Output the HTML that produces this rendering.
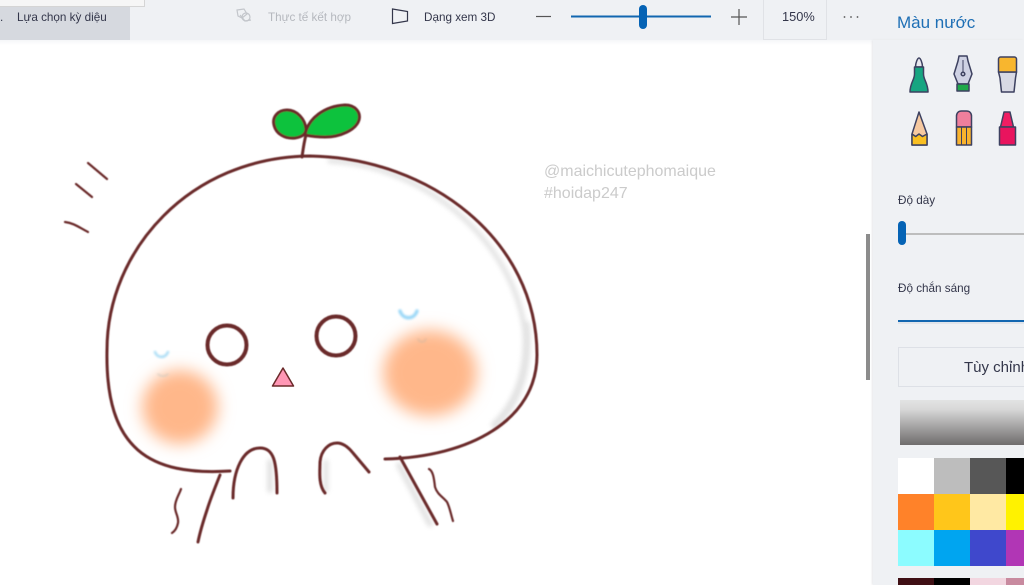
<!DOCTYPE html>
<html><head><meta charset="utf-8"><style>
html,body{margin:0;padding:0;width:1024px;height:585px;overflow:hidden;background:#fff;font-family:"Liberation Sans",sans-serif}
#r{position:absolute;left:0;top:0;width:1024px;height:585px;overflow:hidden}
.a{position:absolute}
.t{position:absolute;white-space:nowrap;line-height:1;color:#33364a;font-size:12px}
.s{position:absolute;width:36px;height:36px}
</style></head><body><div id="r">
<div class="a" style="left:0;top:0;width:1024px;height:40px;background:#eff1f4"></div>
<div class="a" style="left:0;top:40px;width:873px;height:5px;background:linear-gradient(#f5f6f8,#fff)"></div>
<div class="a" style="left:0;top:0;width:130px;height:40px;background:#d6d9df"></div>
<div class="a" style="left:0;top:0;width:144px;height:6px;background:#f6f6f6;border:1px solid #d5d5d5;border-top:0;border-left:0"></div>
<div class="t" style="left:17px;top:12px;font-size:11.7px">Lựa chọn kỳ diệu</div>
<div class="t" style="left:0;top:12px;font-size:11.7px">.</div>
<div class="t" style="left:268px;top:12px;font-size:11.7px;color:#b5b8be">Thực tế kết hợp</div>
<div class="t" style="left:424px;top:12px;font-size:11.7px">Dạng xem 3D</div>
<div class="a" style="left:763px;top:0;width:62px;height:39px;border:1px solid #e0e2e6;border-top:0"></div>
<div class="t" style="left:782px;top:11px;font-size:12.8px">150%</div>
<div class="t" style="left:897px;top:14px;font-size:17px;color:#1e6fb5">Màu nước</div>

<div class="a" style="left:873px;top:40px;width:151px;height:545px;background:#eff1f4;box-shadow:-1px 0 2px #e6e7ea"></div>
<div class="a" style="left:866px;top:234px;width:4px;height:146px;background:#8c8c8c"></div>

<div class="t" style="left:898px;top:195px;font-size:11.7px">Độ dày</div>
<div class="t" style="left:898px;top:283px;font-size:11.7px">Độ chắn sáng</div>
<div class="a" style="left:906px;top:233px;width:118px;height:2px;background:#bdbdbd"></div>
<div class="a" style="left:898px;top:221px;width:8px;height:24px;border-radius:4px;background:#0563b5"></div>
<div class="a" style="left:898px;top:320px;width:126px;height:2px;background:#1266b0"></div>
<div class="a" style="left:898px;top:322px;width:126px;height:2px;background:#e0e4ea"></div>

<div class="a" style="left:898px;top:347px;width:130px;height:38px;border:1px solid #dde0e6"></div>
<div class="t" style="left:964px;top:360px;font-size:15px">Tùy chỉnh</div>
<div class="a" style="left:900px;top:400px;width:124px;height:45px;background:linear-gradient(#e2e3e3,#d8d8d8 20%,#6f6c6c 100%)"></div>

<div class="s" style="left:898px;top:458px;background:#fff"></div>
<div class="s" style="left:934px;top:458px;background:#bdbdbd"></div>
<div class="s" style="left:970px;top:458px;background:#575757"></div>
<div class="s" style="left:1006px;top:458px;background:#000"></div>
<div class="s" style="left:898px;top:494px;background:#ff8229"></div>
<div class="s" style="left:934px;top:494px;background:#ffc61a"></div>
<div class="s" style="left:970px;top:494px;background:#ffe9a3"></div>
<div class="s" style="left:1006px;top:494px;background:#fff200"></div>
<div class="s" style="left:898px;top:530px;background:#8cfcff"></div>
<div class="s" style="left:934px;top:530px;background:#00a5f0"></div>
<div class="s" style="left:970px;top:530px;background:#3f48cc"></div>
<div class="s" style="left:1006px;top:530px;background:#b136b5"></div>
<div class="s" style="left:898px;top:578px;height:7px;background:#3f0f14"></div>
<div class="s" style="left:934px;top:578px;height:7px;background:#000"></div>
<div class="s" style="left:970px;top:578px;height:7px;background:#f2d6e0"></div>
<div class="s" style="left:1006px;top:578px;height:7px;background:#c88a9f"></div>

<svg class="a" style="left:0;top:0" width="1024" height="585" viewBox="0 0 1024 585">
<defs>
<filter id="b1" x="-50%" y="-50%" width="200%" height="200%"><feGaussianBlur stdDeviation="8"/></filter>
<filter id="b2" x="-50%" y="-50%" width="200%" height="200%"><feGaussianBlur stdDeviation="2.500"/></filter>
<filter id="b3" x="-50%" y="-50%" width="200%" height="200%"><feGaussianBlur stdDeviation="1"/></filter>
<filter id="b4" x="-10%" y="-10%" width="120%" height="120%"><feGaussianBlur stdDeviation="0.4"/></filter>
</defs>

<!-- toolbar icons -->
<g fill="none" stroke="#c3c6cb" stroke-width="1.2">
<path d="M237 10l7-1 3 5-5 4-4-2z"/><circle cx="246" cy="17" r="4"/><path d="M240 15l5 6 6-1"/>
</g>
<path d="M392.500 9l15 2.500v9.500l-15 2.500z" fill="none" stroke="#33364a" stroke-width="1.2"/>
<path d="M536 16.500h15" stroke="#555" stroke-width="1.2"/>
<path d="M731 17h16M739 9v16" stroke="#555" stroke-width="1.2"/>
<path d="M571 16.500h140" stroke="#1266b0" stroke-width="2"/>
<rect x="639" y="5" width="8" height="24" rx="4" fill="#0563b5"/>
<g fill="#555"><circle cx="844.500" cy="17" r=".9"/><circle cx="851" cy="17" r=".9"/><circle cx="857.500" cy="17" r=".9"/></g>

<!-- brushes -->
<g stroke="#3d4160" stroke-width="1.500" stroke-linejoin="round">
<path d="M915.500 67c0-4 2-9 3.500-9s3.500 5 3.500 9z" fill="#e8e8ee"/>
<path d="M914.500 67h9v7c0 6 4.500 9 4.500 18h-18c0-9 4.500-12 4.500-18z" fill="#17a581"/>
<path d="M959 56h8l1 5 4 13-4 10h-10l-4-10 4-13z" fill="#ced1e3"/>
<circle cx="963" cy="74" r="1.800" fill="#ced1e3"/>
<path d="M963 60v12" stroke-width="1"/>
<rect x="957" y="84" width="12" height="7" fill="#1fa84a"/>
<path d="M998.500 72h18l-1 6-1.500 14h-12.500l-1.500-14z" fill="#d8d9e4"/>
<path d="M998.500 59c0-1 1-2 2-2h14c1 0 2 1 2 2v13h-18z" fill="#f8b62e"/>
<path d="M919 112l8 22v11h-15v-11z" fill="#f6c9a0"/>
<path d="M912 134l3.700 2.500 3.300-2.500 3.500 2.500 4.500-2.500v11h-15z" fill="#f9bf22"/>
<path d="M956.500 127v-11c0-3 2-5 5-5h5c3 0 5 2 5 5v11z" fill="#ef7f9c"/>
<rect x="956.500" y="127" width="15" height="18" fill="#f9b32d"/>
<path d="M961.500 127v18M966.500 127v18" stroke-width="1"/>
<path d="M1004 112h6l3.500 15h-13z" fill="#f01e63"/>
<path d="M999.500 127h16v18h-16z" fill="#e9145e"/>
</g>

<!-- drawing shadows -->
<g fill="none" stroke="#dadada" stroke-linecap="round" filter="url(#b2)" opacity=".75">
<path d="M330 161C425 165 522 245 526 345" stroke-width="5"/>
<path d="M526 325C530 375 515 405 495 425" stroke-width="8"/>
<path d="M403 463L434 522" stroke-width="6" transform="translate(-4,2)"/>
<path d="M270 462v28" stroke-width="6"/>
<path d="M326 462v28" stroke-width="5"/>
</g>

<!-- cheeks -->
<ellipse cx="180" cy="407" rx="38" ry="37" fill="#ffb78a" filter="url(#b1)"/>
<ellipse cx="430" cy="373" rx="47" ry="43" fill="#ffb78a" filter="url(#b1)"/>
<g fill="none" stroke-linecap="round">
<path d="M155 352c2 6 10 7 13 0" stroke="#a8dcf5" stroke-width="2.500" filter="url(#b3)"/>
<path d="M400 311c3 9 14 9 17 0" stroke="#9cd8f7" stroke-width="3.500" filter="url(#b3)"/>
<path d="M158 374c3 3 7 3 10 0" stroke="#c8c8c0" stroke-width="1.500" filter="url(#b3)" opacity=".7"/>
<path d="M418 339c2 4 6 4 8 0" stroke="#d2b7a0" stroke-width="1.500" filter="url(#b3)" opacity=".7"/>
</g>

<!-- outlines -->
<g fill="none" stroke="#6b2a2a" stroke-width="3" stroke-linecap="round" stroke-linejoin="round" filter="url(#b4)">
<path d="M230 471C150 476 105 450 107 350C107 250 190 157 310 156C430 158 537 240 537 355C537 420 470 457 385 459"/>
<path d="M220 475C214 490 210 500 207 510C203 522 200 532 198 542"/>
<path d="M400 457L437 524" />
<path d="M233 498C233 470 243 448 260 448C274 448 277 462 277 493"/>
<path d="M325 493C318 485 320 470 320 462C321 450 329 443 337 443C344 443 349 448 353 453L369 472"/>
<path d="M181 489C179 495 175 500 175 507C175 513 179 517 178 523C177 528 175 531 172 533" stroke-width="2.200"/>
<path d="M429 469C433 471 434 478 435 487C437 494 443 497 447 502C450 508 451 515 453 521" stroke-width="2.200"/>
<path d="M88 163L107 179M76 184L92 197M65 222C74 223 80 228 88 232" stroke-width="2.200"/>
<circle cx="227" cy="345" r="19.500" stroke-width="4"/>
<circle cx="336" cy="336" r="19.500" stroke-width="4"/>
<path d="M302 157C303 150 304 142 306 135"/>
<path d="M306 129C305 119 297 110 287 110C278 110 272 117 274 125C276 134 285 139 295 138C302 137 306 134 306 129Z" fill="#10c23c"/>
<path d="M305 135C308 118 325 106 345 105C355 105 361 112 359 120C356 130 340 137 325 137C317 137 310 136 305 135Z" fill="#10c23c"/>
</g>
<path d="M283 368L272.500 386H293.500Z" fill="#ff97b5" stroke="#6b2a2a" stroke-width="1.500" stroke-linejoin="round"/>

<text x="544" y="176" font-family="Liberation Sans, sans-serif" font-size="16" fill="#cbcbcb">@maichicutephomaique</text>
<text x="544" y="198" font-family="Liberation Sans, sans-serif" font-size="16" fill="#cbcbcb">#hoidap247</text>
</svg>
</div></body></html>
